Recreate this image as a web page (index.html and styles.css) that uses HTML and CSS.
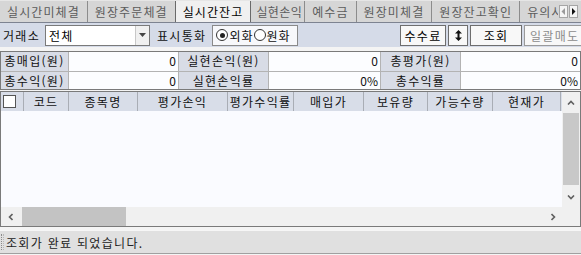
FILE: index.html
```html
<!DOCTYPE html>
<html lang="ko">
<head>
    <meta charset="UTF-8">
    <meta name="viewport" content="width=device-width, initial-scale=1.0">
    <title>실시간잔고</title>
    <link rel="stylesheet" href="styles.css">
</head>
<body>
    <div class="tabs">
        <div class="tab">실시간미체결</div>
        <div class="tab">원장주문체결</div>
        <div class="tab active">실시간잔고</div>
        <div class="tab narrow">실현손익</div>
        <div class="tab">예수금</div>
        <div class="tab">원장미체결</div>
        <div class="tab">원장잔고확인</div>
        <div class="tab last">유의사항</div>
        <div class="tab-arrows">
            <span class="arrow-btn off">
                <svg width="5" height="7" viewBox="0 0 5 7"><polygon points="4,0 4,7 0.5,3.5" fill="#9a9a9a"/></svg>
            </span>
            <span class="arrow-btn">
                <svg width="5" height="7" viewBox="0 0 5 7"><polygon points="1,0 1,7 4.5,3.5" fill="#111"/></svg>
            </span>
        </div>
    </div>

    <div class="toolbar">
        <span class="tb-label">거래소</span>
        <div class="select">
            <span class="select-text">전체</span>
            <span class="select-btn">
                <svg width="7" height="4" viewBox="0 0 7 4"><polygon points="0,0 7,0 3.5,4" fill="#444"/></svg>
            </span>
        </div>
        <span class="tb-label gap">표시통화</span>
        <div class="radio-group">
            <label class="radio"><span class="dot checked"></span>외화</label>
            <label class="radio"><span class="dot"></span>원화</label>
        </div>
        <div class="tb-buttons">
            <button class="btn w-fee">수수료</button>
            <button class="btn w-icon">
                <svg width="7" height="11" viewBox="0 0 7 11"><polygon points="3.5,0 7,3.5 4.5,3.5 4.5,7.5 7,7.5 3.5,11 0,7.5 2.5,7.5 2.5,3.5 0,3.5" fill="#111"/></svg>
            </button>
            <button class="btn w-query">조회</button>
            <button class="btn w-sell" disabled>일괄매도</button>
        </div>
    </div>

    <div class="summary">
        <div class="cell label">총매입(원)</div>
        <div class="cell value">0</div>
        <div class="cell label">실현손익(원)</div>
        <div class="cell value">0</div>
        <div class="cell label">총평가(원)</div>
        <div class="cell value">0</div>
        <div class="cell label">총수익(원)</div>
        <div class="cell value">0</div>
        <div class="cell label">실현손익률</div>
        <div class="cell value">0%</div>
        <div class="cell label">총수익률</div>
        <div class="cell value">0%</div>
    </div>

    <div class="list">
        <div class="list-main">
            <div class="list-head">
                <div class="col c-check"><span class="checkbox"></span></div>
                <div class="col c-code">코드</div>
                <div class="col c-name">종목명</div>
                <div class="col c-pl">평가손익</div>
                <div class="col c-rate">평가수익률</div>
                <div class="col c-buy">매입가</div>
                <div class="col c-qty">보유량</div>
                <div class="col c-avail">가능수량</div>
                <div class="col c-price">현재가</div>
            </div>
            <div class="list-body"></div>
        </div>
        <div class="vscroll">
            <span class="sb-btn">
                <svg width="8" height="5" viewBox="0 0 8 5"><polyline points="1,4.5 4,1.5 7,4.5" fill="none" stroke="#606060" stroke-width="1.6"/></svg>
            </span>
            <span class="v-thumb"></span>
            <span class="v-track"></span>
            <span class="sb-btn">
                <svg width="8" height="5" viewBox="0 0 8 5"><polyline points="1,0.5 4,3.5 7,0.5" fill="none" stroke="#606060" stroke-width="1.6"/></svg>
            </span>
        </div>
        <div class="hscroll">
            <span class="sb-btn h">
                <svg width="5" height="8" viewBox="0 0 5 8"><polyline points="4.5,1 1.5,4 4.5,7" fill="none" stroke="#606060" stroke-width="1.6"/></svg>
            </span>
            <span class="h-thumb"></span>
            <span class="h-track"></span>
            <span class="sb-btn h">
                <svg width="5" height="8" viewBox="0 0 5 8"><polyline points="0.5,1 3.5,4 0.5,7" fill="none" stroke="#606060" stroke-width="1.6"/></svg>
            </span>
        </div>
        <div class="corner"></div>
    </div>

    <div class="statusbar">
        <span class="grip"></span>
        <span class="status-text">조회가 완료 되었습니다.</span>
    </div>
</body>
</html>
```

FILE: styles.css
```css
* {
    margin: 0;
    padding: 0;
    box-sizing: border-box;
}

body {
    font-family: 'Noto Sans CJK KR', 'Liberation Sans', sans-serif;
    font-size: 12px;
    letter-spacing: 1.3px;
    color: #111;
    background: #f4f4f4;
    width: 581px;
    height: 255px;
    overflow: hidden;
}

/* ---- tabs ---- */
.tabs {
    display: flex;
    height: 23px;
    background: #d6d6d6;
    border-top: 1px solid #e6e6e6;
    border-bottom: 1px solid #7d8391;
    overflow: hidden;
}

.tab {
    padding: 0 7px;
    line-height: 21px;
    letter-spacing: 1.1px;
    color: #5c5c5c;
    border-right: 1px solid #8c8c8c;
    white-space: nowrap;
    flex-shrink: 0;
}

.tab.narrow {
    padding: 0 2px 0 5px;
    letter-spacing: 0.4px;
}

.tab.active {
    background: #f0f0f0;
    color: #000;
    border-left: 1px solid #6a6a6a;
    border-right: 1px solid #6a6a6a;
    margin-left: -1px;
}

.tab.last {
    flex: 1;
    flex-shrink: 1;
    min-width: 0;
    overflow: hidden;
    border-right: none;
    padding-right: 0;
}

.tab-arrows {
    display: flex;
    align-items: center;
    gap: 1px;
    padding: 0 3px 0 1px;
    background: #d6d6d6;
}

.arrow-btn {
    width: 9px;
    height: 13px;
    display: flex;
    align-items: center;
    justify-content: center;
    background: #f4f4f4;
    border: 1px solid #a5a5a5;
}

/* ---- toolbar ---- */
.toolbar {
    display: flex;
    align-items: center;
    height: 24px;
    background: #d5dbe8;
    padding-left: 3px;
    overflow: hidden;
}

.tb-label {
    white-space: nowrap;
    margin-right: 5px;
}

.tb-label.gap {
    margin-left: 7px;
    margin-right: 6px;
}

.select {
    display: flex;
    width: 105px;
    height: 21px;
    background: #fff;
    border: 1px solid #7a7a7a;
}

.select-text {
    flex: 1;
    padding-left: 3px;
    line-height: 19px;
    color: #000;
}

.select-btn {
    width: 14px;
    display: flex;
    align-items: center;
    justify-content: center;
    background: #f0f0f0;
    border-left: 1px solid #c8c8c8;
}

.radio-group {
    display: flex;
    align-items: center;
    gap: 0;
    width: 86px;
    height: 21px;
    padding-left: 3px;
    background: #f7f8fb;
    border: 1px solid #8a8a8a;
    letter-spacing: 1px;
}

.radio {
    display: flex;
    align-items: center;
    gap: 1px;
}

.dot {
    width: 12px;
    height: 12px;
    border-radius: 50%;
    border: 1px solid #333;
    background: #fff;
    position: relative;
}

.dot.checked::after {
    content: '';
    position: absolute;
    left: 2.5px;
    top: 2.5px;
    width: 5px;
    height: 5px;
    border-radius: 50%;
    background: #222;
}

.tb-buttons {
    display: flex;
    flex-shrink: 0;
    gap: 2px;
    margin-left: auto;
    margin-right: -8px;
}

.btn {
    height: 21px;
    font-family: inherit;
    font-size: 12px;
    letter-spacing: 1.3px;
    color: #000;
    background: #f8f8f8;
    border: 1px solid #6e6e6e;
    display: flex;
    align-items: center;
    justify-content: center;
    flex-shrink: 0;
}

.w-fee { width: 46px; }
.w-icon { width: 20px; }
.w-query { width: 52px; }
.w-sell { width: 65px; justify-content: flex-start; padding-left: 5px; }

.btn:disabled {
    color: #8c8c8c;
    border-color: #9a9a9a;
}

/* ---- summary grid ---- */
.summary {
    display: grid;
    grid-template-columns: 67px 109px 89px 111px 79px 1fr;
    grid-template-rows: 19px 17px;
    gap: 1px;
    margin-top: 4px;
    background: #b3b3b3;
    border: 1px solid #7a7a7a;
}

.cell {
    line-height: 17px;
    white-space: nowrap;
}

.cell.label {
    background: #d8dce6;
    text-align: center;
    color: #111;
}

.cell.value {
    background: #fcfdff;
    text-align: right;
    padding-right: 2px;
    letter-spacing: 0;
}

/* ---- list ---- */
.list {
    display: grid;
    grid-template-columns: 1fr 18px;
    grid-template-rows: 115px 19px;
    margin-top: 1px;
    border: 1px solid #7a7a7a;
    background: #fafbff;
}

.list-main {
    display: flex;
    flex-direction: column;
    overflow: hidden;
}

.list-head {
    display: flex;
    height: 19px;
    background: #d8dde8;
}

.col {
    flex-shrink: 0;
    text-align: center;
    line-height: 19px;
    border-right: 1px solid #a9adb5;
    white-space: nowrap;
}

.c-check { width: 23px; display: flex; align-items: center; padding-left: 2px; }
.c-code { width: 45px; }
.c-name { width: 69px; }
.c-pl { width: 90px; }
.c-rate { width: 66px; }
.c-buy { width: 70px; }
.c-qty { width: 64px; }
.c-avail { width: 65px; }
.c-price { width: 68px; }

.checkbox {
    width: 13px;
    height: 13px;
    background: #fff;
    border: 1px solid #555;
}

.list-body {
    flex: 1;
    background: #fafbff;
}

.vscroll {
    display: flex;
    flex-direction: column;
    background: #f0f0f0;
}

.sb-btn {
    height: 20px;
    display: flex;
    align-items: center;
    justify-content: center;
    flex-shrink: 0;
}

.sb-btn.h {
    width: 18px;
    height: auto;
}

.v-thumb {
    height: 72px;
    margin: 1px 1px 0 1px;
    background: #c8c8c8;
}

.v-track {
    flex: 1;
}

.hscroll {
    display: flex;
    background: #f0f0f0;
}

.h-thumb {
    width: 104px;
    margin-left: 3px;
    background: #c3c3c3;
}

.h-track {
    flex: 1;
}

.corner {
    background: #f0f0f0;
}

/* ---- status bar ---- */
.statusbar {
    display: flex;
    align-items: center;
    height: 24px;
    margin-top: 3px;
    background: #e0e0e0;
    border-top: 1px solid #f6f6f6;
    border-bottom: 1px solid #a0a0a0;
}

.grip {
    width: 3px;
    height: 16px;
    margin: 0 2px 0 1px;
    border-left: 1px dotted #8a8a8a;
    border-right: 1px dotted #b8b8b8;
}

.status-text {
    color: #222;
}
```
